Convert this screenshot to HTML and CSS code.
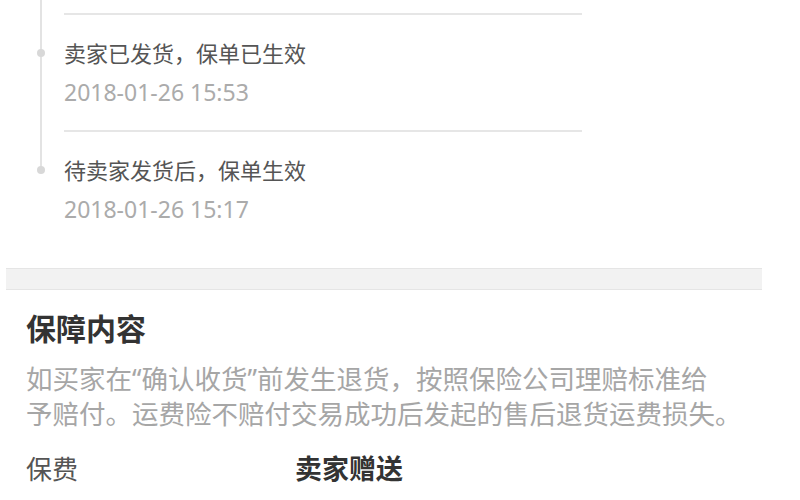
FILE: index.html
```html
<!DOCTYPE html>
<html>
<head>
    <meta charset="utf-8">
    <title>运费险详情</title>
    <link rel="stylesheet" href="styles.css">
</head>
<body>
    <div class="page">
        <!-- 物流/保单进度 -->
        <ul class="timeline">
            <li class="rail-top"></li>
            <li class="step">
                <div class="step-body">
                    <p class="step-title">卖家已发货，保单已生效</p>
                    <p class="step-time">2018-01-26 15:53</p>
                </div>
            </li>
            <li class="step step-last">
                <div class="step-body">
                    <p class="step-title">待卖家发货后，保单生效</p>
                    <p class="step-time">2018-01-26 15:17</p>
                </div>
            </li>
        </ul>

        <div class="gap-band"></div>

        <!-- 保障内容 -->
        <section class="cover">
            <h2 class="cover-title">保障内容</h2>
            <p class="cover-desc">如买家在“确认收货”前发生退货，按照保险公司理赔标准给<br>予赔付。运费险不赔付交易成功后发起的售后退货运费损失。</p>
            <div class="fee-row">
                <span class="fee-label">保费</span>
                <span class="fee-value">卖家赠送</span>
            </div>
        </section>
    </div>
</body>
</html>
```

FILE: styles.css
```css
body {
    margin: 0;
    background-color: #fff;
    font-family: "Noto Sans", "Noto Sans CJK SC", sans-serif;
}

.page {
    width: 800px;
    height: 500px;
    overflow: hidden;
}

/* Timeline */
.timeline {
    list-style: none;
    margin: 0;
    padding: 0;
}

.timeline li {
    padding-left: 64px;
    background: linear-gradient(#e3e3e3, #e3e3e3) 40px 0 / 2px 100% no-repeat;
}

.rail-top {
    height: 13px;
}

.step {
    position: relative;
}

.step::before {
    content: "";
    position: absolute;
    left: 37px;
    top: 36px;
    width: 8px;
    height: 8px;
    border-radius: 50%;
    background-color: #d8d8d8;
}

.timeline .step-last {
    background-size: 2px 40px;
}

.step-body {
    width: 518px;
    border-top: 2px solid #e6e6e6;
    padding: 23px 0;
}

.step-title {
    margin: 0;
    font-size: 22px;
    line-height: 30px;
    color: #555;
}

.step-time {
    margin: 9px 0 0;
    font-size: 23px;
    line-height: 30px;
    color: #ababab;
}

/* Gray separator */
.gap-band {
    height: 20px;
    margin: 21px 38px 0 6px;
    background-color: #f2f2f2;
    border-top: 1px solid #e5e5e5;
    border-bottom: 1px solid #e5e5e5;
}

/* Cover section */
.cover {
    padding: 19px 0 0 26px;
}

.cover-title {
    margin: 0;
    font-size: 30px;
    line-height: 40px;
    font-weight: bold;
    color: #333;
}

.cover-desc {
    margin: 13px 0 0;
    font-size: 26.5px;
    line-height: 35px;
    color: #a6a6a6;
}

.fee-row {
    display: grid;
    grid-template-columns: 269px auto;
    margin-top: 19px;
    line-height: 36px;
}

.fee-label {
    font-size: 26px;
    color: #555;
}

.fee-value {
    font-size: 27px;
    font-weight: bold;
    color: #333;
}
```
